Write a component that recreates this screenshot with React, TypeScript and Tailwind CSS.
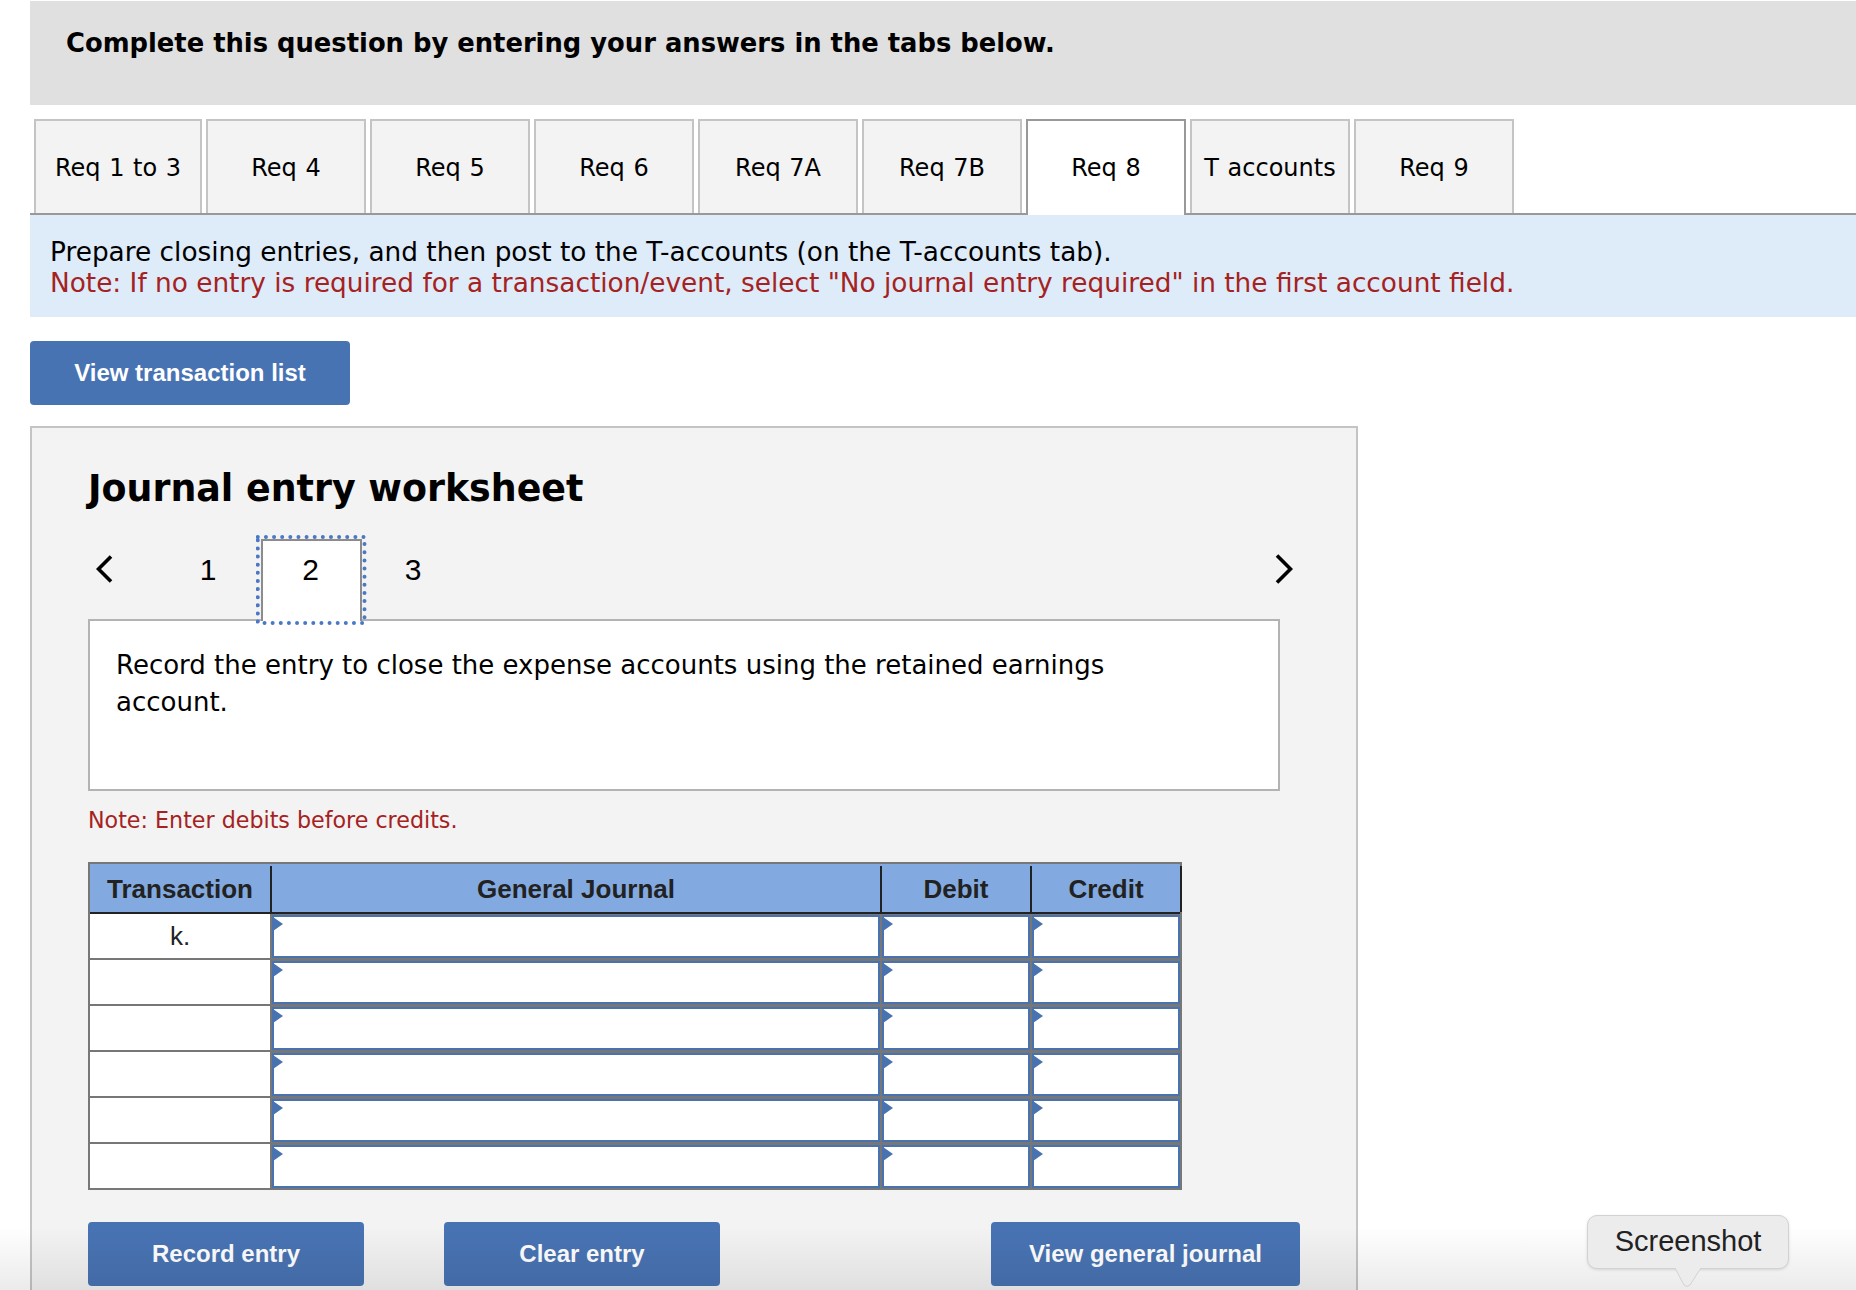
import React from "react";

const verdana = "font-['DejaVu_Sans',sans-serif]";
const arial = "font-['Liberation_Sans',Arial,sans-serif]";

const tabs = ["Req 1 to 3", "Req 4", "Req 5", "Req 6", "Req 7A", "Req 7B", "Req 8", "T accounts", "Req 9"];
const rows = ["k.", "", "", "", "", ""];

const Tab = ({ label, index }: { label: string; index: number }) => {
  const active = label === "Req 8";
  return (
    <div
      className={`flex items-center justify-center border-2 text-[24px] text-black [word-spacing:1px] ${
        index === 0 ? "w-[168px]" : "w-[160px]"
      } ${
        active
          ? "relative z-10 -mb-[2px] h-[96px] border-[#999999] border-b-0 bg-white"
          : "h-[94px] border-[#c4c4c4] border-b-0 bg-[#f3f3f3] pt-[2px]"
      }`}
    >
      {label}
    </div>
  );
};

const EntryCell = () => (
  <div className="h-full bg-[#777777] pt-px">
    <div className="relative h-full border-2 border-[#4873b0] bg-white">
      <span className="absolute left-[-1px] top-0 h-0 w-0 border-y-[7px] border-l-[10px] border-y-transparent border-l-[#4873b0]" />
    </div>
  </div>
);

const ActionButton = ({ label, className = "" }: { label: string; className?: string }) => (
  <button className={`flex h-[64px] items-center justify-center rounded-[4px] bg-[#4873b3] text-[24px] font-bold text-white ${arial} ${className}`}>
    {label}
  </button>
);

export default function App() {
  return (
    <div className={`relative h-[1290px] w-[1856px] overflow-hidden bg-white pl-[30px] pt-px ${verdana}`}>
      <div className="h-[104px] bg-[#e0e0e0] pl-[36px] pt-[24px] text-[25.8px] font-bold leading-[36px] text-black">
        Complete this question by entering your answers in the tabs below.
      </div>

      <div className="mt-[14px] flex gap-[4px] border-b-2 border-[#999999] pl-[4px]">
        {tabs.map((t, i) => (
          <Tab key={t} label={t} index={i} />
        ))}
      </div>

      <div className="h-[102px] bg-[#deebf8] pl-[20px] pt-[22px] text-[26.35px] leading-[31px]">
        <p className="text-black">Prepare closing entries, and then post to the T-accounts (on the T-accounts tab).</p>
        <p className="text-[#a52222]">Note: If no entry is required for a transaction/event, select "No journal entry required" in the first account field.</p>
      </div>

      <ActionButton label="View transaction list" className="mt-[24px] w-[320px]" />

      <div className="mt-[21px] h-[900px] w-[1328px] border-2 border-[#c4c4c4] bg-[#f3f3f3] pl-[56px] pt-[37px]">
        <h1 className="text-[36.4px] font-bold leading-[48px] text-black">Journal entry worksheet</h1>

        <div className={`relative z-10 mt-[26px] -mb-[2px] flex h-[82px] w-[1205px] pl-[8px] text-[30px] text-black ${arial}`}>
          <svg className="mt-[16px] h-[28px] w-[17px]" viewBox="0 0 17 28" fill="none">
            <path d="M15 1.5 L2.5 14 L15 26.5" stroke="#000" strokeWidth="3.6" />
          </svg>
          <div className="ml-[44px] flex h-[62px] w-[102px] items-center justify-center pb-px">1</div>
          <div className="relative ml-[2px] flex h-[82px] w-[101px] justify-center border-2 border-b-0 border-[#8c8c8c] bg-white pr-[2px] pt-[6px]">
            2
            {/* focus ring */}
            <svg className="absolute -left-[7px] -top-[6px] h-[96px] w-[112px]" viewBox="0 0 112 96" fill="none">
              <rect x="1.8" y="2" width="106.7" height="86" stroke="#4a78c4" strokeWidth="4" strokeLinecap="round" strokeDasharray="0 8.13" />
            </svg>
          </div>
          <div className="flex h-[62px] w-[102px] items-center justify-center pb-px">3</div>
          <svg className="ml-auto mt-[15px] h-[30px] w-[18px]" viewBox="0 0 18 30" fill="none">
            <path d="M2 1.5 L15.5 15 L2 28.5" stroke="#000" strokeWidth="3.6" />
          </svg>
        </div>

        <div className="h-[172px] w-[1192px] border-2 border-[#b3b3b3] bg-white pl-[26px] pr-[100px] pt-[26px] text-[26px] leading-[36.5px] text-black">
          Record the entry to close the expense accounts using the retained earnings account.
        </div>

        <p className="mt-[14px] text-[22.2px] leading-[30px] text-[#a52222]">Note: Enter debits before credits.</p>

        <div className={`mt-[27px] w-[1094px] border-x-2 border-t-2 border-[#777777] text-[26px] text-[#222222] ${arial}`}>
          <div className="grid h-[50px] grid-cols-[182px_610px_150px_150px] border-b-2 border-[#222222] bg-[#82aae0] pt-[2px] font-bold">
            <div className="flex items-center justify-center border-r-2 border-[#222222]">Transaction</div>
            <div className="flex items-center justify-center border-r-2 border-[#222222]">General Journal</div>
            <div className="flex items-center justify-center border-r-2 border-[#222222]">Debit</div>
            <div className="flex items-center justify-center border-r-2 border-[#222222]">Credit</div>
          </div>
          {rows.map((r, i) => (
            <div key={i} className="grid h-[46px] grid-cols-[182px_610px_150px_148px] border-b-2 border-[#777777]">
              <div className="flex items-center justify-center border-r-2 border-[#777777] bg-white">{r}</div>
              <div className="border-r-2 border-[#777777]">
                <EntryCell />
              </div>
              <div className="border-r-2 border-[#777777]">
                <EntryCell />
              </div>
              <div>
                <EntryCell />
              </div>
            </div>
          ))}
        </div>

        <div className="mt-[32px] flex">
          <ActionButton label="Record entry" className="w-[276px]" />
          <ActionButton label="Clear entry" className="ml-[80px] w-[276px]" />
          <ActionButton label="View general journal" className="ml-[271px] w-[309px]" />
        </div>
      </div>

      {/* dock fade over the bottom of the page */}
      <div className="pointer-events-none absolute inset-x-0 bottom-0 h-[64px] bg-gradient-to-b from-transparent to-black/[0.08]" />

      {/* screenshot tooltip */}
      <div className={`absolute left-[1587px] top-[1215px] flex h-[54px] w-[202px] items-center justify-center rounded-[10px] border border-[#d2d2d2] bg-[#ececec] text-[29px] text-[#222222] shadow-[0_1px_3px_rgba(0,0,0,0.12)] ${arial}`}>
        Screenshot
      </div>
      <svg className="absolute left-[1674px] top-[1267px] h-[21px] w-[28px]" viewBox="0 0 28 21">
        <path d="M1 1 L10 18 Q13 21 16 18 L27 1 Z" fill="#ececec" />
        <path d="M1 1 L10 18 Q13 21 16 18 L27 1" fill="none" stroke="#d2d2d2" />
      </svg>
    </div>
  );
}
